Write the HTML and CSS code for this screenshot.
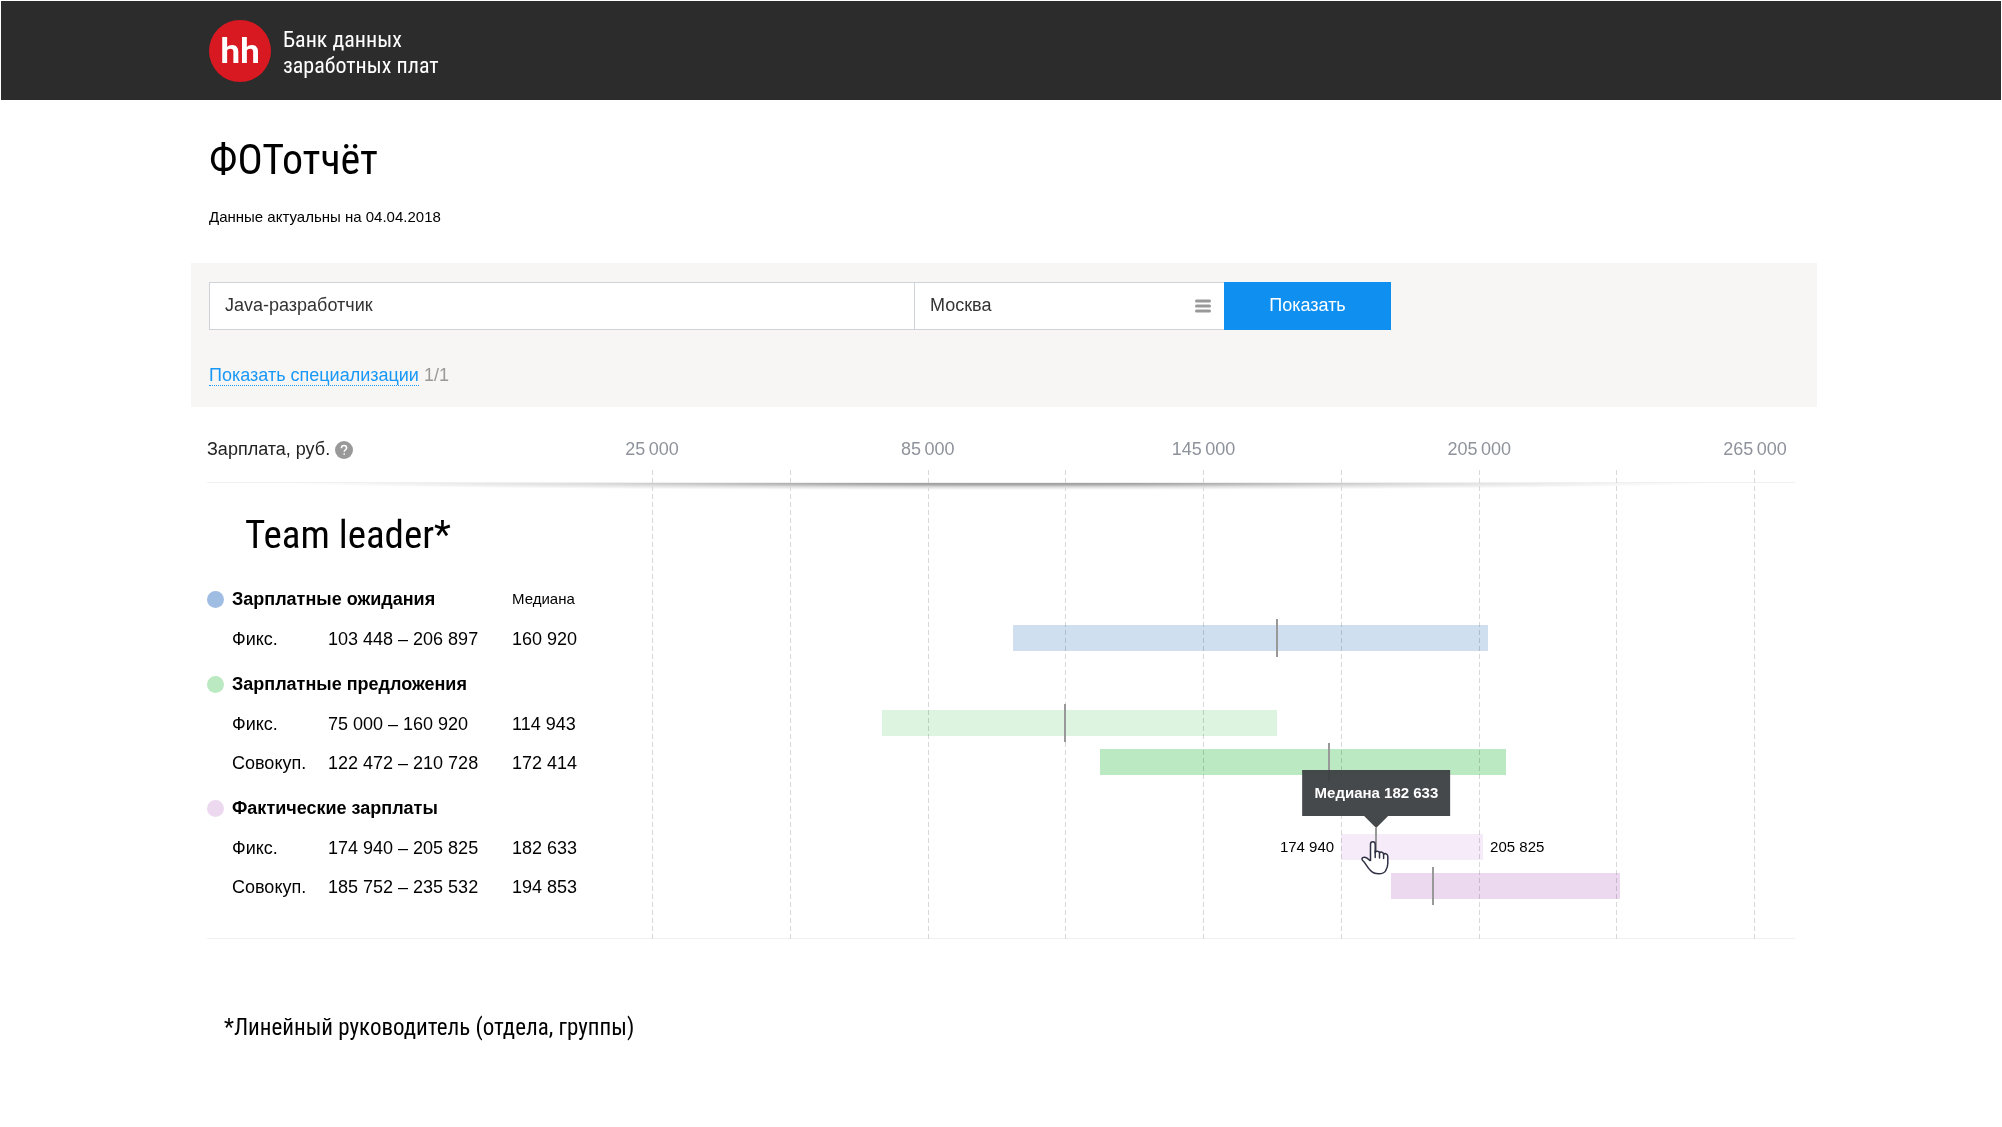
FILE: index.html
```html
<!DOCTYPE html>
<html lang="ru">
<head>
<meta charset="utf-8">
<meta name="viewport" content="width=device-width, initial-scale=1">
<title>ФОТотчёт — Банк данных заработных плат</title>
<link rel="stylesheet" href="styles.css">
</head>
<body>
<header class="topbar">
  <a class="brand" href="#">
    <svg class="brand-logo" viewBox="0 0 62 62" aria-hidden="true">
      <circle cx="31" cy="31" r="31" fill="#d91921"/>
      <text class="brand-hh" x="31" y="43" text-anchor="middle" fill="#fff">hh</text>
    </svg>
    <span class="brand-name">Банк данных<br>заработных плат</span>
  </a>
</header>

<main class="page">
  <div class="intro">
    <h1 class="title">ФОТотчёт</h1>
    <p class="updated">Данные актуальны на 04.04.2018</p>
  </div>

  <form class="search">
    <div class="fields">
      <input class="field field-job" type="text" value="Java-разработчик" aria-label="Профессия">
      <div class="region">
        <input class="field field-region" type="text" value="Москва" aria-label="Регион">
        <button class="region-list" type="button" aria-label="Выбрать регион">
          <svg viewBox="0 0 16 14" width="16" height="14" stroke="#999" stroke-width="3" stroke-linecap="round"><path d="M1.5 2h13M1.5 7h13M1.5 12h13"/></svg>
        </button>
      </div>
      <button class="submit" type="submit">Показать</button>
    </div>
    <p class="specs"><a class="specs-link" href="#">Показать специализации</a> 1/1</p>
  </form>

  <section class="chart">
    <div class="axis">
      <div class="axis-title">Зарплата, руб.
        <svg class="help" viewBox="0 0 18 18" width="18" height="18" aria-hidden="true"><circle cx="9" cy="9" r="9" fill="#999"/><path d="M6.4 7.2c0-1.7 1.1-2.6 2.6-2.6s2.6.9 2.6 2.3c0 1.8-2.4 1.9-2.4 3.9M9.2 12.2v1.6" fill="none" stroke="#fff" stroke-width="1.5"/></svg>
      </div>
      <div class="ticks">
        <span class="tick">25&#8201;000</span>
        <span class="tick">85&#8201;000</span>
        <span class="tick">145&#8201;000</span>
        <span class="tick">205&#8201;000</span>
        <span class="tick">265&#8201;000</span>
      </div>
    </div>
    <div class="gridlines" aria-hidden="true"><i></i><i></i><i></i><i></i><i></i><i></i><i></i><i></i><i></i></div>

    <h2 class="role">Team leader*</h2>

    <table class="salaries">
      <colgroup><col class="col-kind"><col class="col-range"><col class="col-median"><col></colgroup>
      <tbody>
        <tr class="group"><th colspan="2" scope="rowgroup"><span class="name dot-blue">Зарплатные ожидания</span></th><th class="median-head" scope="col">Медиана</th><td></td></tr>
        <tr><td class="kind">Фикс.</td><td>103 448 – 206 897</td><td>160 920</td>
          <td><div class="plot"><div class="bar bar-blue" style="left:32.69%;width:43.1%"></div><div class="mark" style="left:56.63%"></div></div></td></tr>
      </tbody>
      <tbody>
        <tr class="group"><th colspan="2" scope="rowgroup"><span class="name dot-green">Зарплатные предложения</span></th><td></td><td></td></tr>
        <tr><td class="kind">Фикс.</td><td>75 000 – 160 920</td><td>114 943</td>
          <td><div class="plot"><div class="bar bar-green-light" style="left:20.83%;width:35.8%"></div><div class="mark" style="left:37.48%"></div></div></td></tr>
        <tr><td class="kind">Совокуп.</td><td>122 472 – 210 728</td><td>172 414</td>
          <td><div class="plot"><div class="bar bar-green" style="left:40.61%;width:36.77%"></div><div class="mark" style="left:61.42%"></div></div></td></tr>
      </tbody>
      <tbody>
        <tr class="group"><th colspan="2" scope="rowgroup"><span class="name dot-pink">Фактические зарплаты</span></th><td></td><td></td></tr>
        <tr><td class="kind">Фикс.</td><td>174 940 – 205 825</td><td>182 633</td>
          <td><div class="plot">
            <div class="bar bar-pink-light" style="left:62.48%;width:12.87%"><span class="edge edge-min">174 940</span><span class="edge edge-max">205 825</span></div>
            <div class="mark" style="left:65.68%">
              <div class="tooltip" role="tooltip">Медиана 182 633</div>
              <svg class="pointer" viewBox="0 0 29 36" width="29" height="36" aria-hidden="true"><path d="M9.500 21V4.200C9.500.8 14.200.8 14.200 4.200V12.500C15 10.500 18.300 10.900 18.500 13C19.500 11.400 22.500 12 22.600 14.200C24 13 26.800 13.800 26.800 16.500V23.500C26.800 27 25.600 29 24.500 31C22.500 34.500 13.500 35 9.500 30.500C5.500 26.500 4.500 23 2 20.800C-.8 17.900 2.800 16.200 6 18.200L9.500 21" fill="#fff" stroke="#2f3044" stroke-width="1.500" stroke-linejoin="round"/><path d="M14.200 11v6.500M18.500 13v5M22.600 14.500v4" fill="none" stroke="#2f3044" stroke-width="1.500" stroke-linecap="round"/></svg>
            </div>
          </div></td></tr>
        <tr><td class="kind">Совокуп.</td><td>185 752 – 235 532</td><td>194 853</td>
          <td><div class="plot"><div class="bar bar-pink" style="left:66.98%;width:20.74%"></div><div class="mark" style="left:70.77%"></div></div></td></tr>
      </tbody>
    </table>
  </section>

  <p class="footnote">*Линейный руководитель (отдела, группы)</p>
</main>
</body>
</html>
```
FILE: styles.css
```css
* { box-sizing: border-box; }

body {
  margin: 0;
  background: #fff;
  color: #000;
  font: 18px/24px "Liberation Sans", Arial, sans-serif;
}

h1, h2, p { margin: 0; font-weight: 400; }

input, button { font: inherit; margin: 0; border-radius: 0; }

/* Header */
.topbar {
  margin: 1px 1px 0;
  padding: 19px 208px 18px;
  background: #2c2c2c;
}

.brand {
  display: flex;
  align-items: center;
  gap: 12px;
  color: #fff;
  text-decoration: none;
  font: 22px/26px "Roboto Condensed", Roboto, sans-serif;
}

.brand-logo { width: 62px; height: 62px; }

.brand-hh { font: 900 35px Lato, sans-serif; }

.brand-name { padding-top: 4px; }

/* Page */
.page { padding: 0 185px 0 191px; }

.intro { padding: 33px 18px 34px; }

.title { font: 42px/54px "Roboto Condensed", Roboto, sans-serif; }

.updated { margin-top: 18px; font-size: 15px; }

/* Search */
.search { padding: 19px 18px 20px; background: #f7f6f5; }

.fields { display: flex; height: 48px; max-width: 1182px; }

.field {
  width: 100%;
  height: 48px;
  padding: 0 15px 2px;
  border: 1px solid #cdd3d8;
  background: #fff;
  color: #333;
}

.field-job { flex: 1; border-right: 0; }

.region { position: relative; flex: 0 0 310px; }

.field-region { border-right: 0; }

.region-list {
  position: absolute;
  right: 8px;
  top: 12px;
  display: flex;
  padding: 5px;
  border: 0;
  background: none;
}

.submit {
  flex: 0 0 167px;
  padding-bottom: 3px;
  border: 0;
  background: #0f8ff0;
  color: #fff;
}

.specs { margin-top: 33px; color: #999; }

.specs-link { color: #1a98f5; text-decoration: none; border-bottom: 1px dotted #1a98f5; }

/* Chart */
.chart {
  position: relative;
  margin: 0 22px 0 16px;
  padding: 0 40px 32px 0;
  border-bottom: 1px solid #f0f0f0;
}

.axis { display: flex; height: 75px; padding-top: 30px; }

.axis::after {
  content: "";
  position: absolute;
  left: 0;
  right: 0;
  top: 75px;
  height: 7px;
  border-top: 1px solid #f0f0f0;
  background: radial-gradient(ellipse 45% 100% at 50% 0, #a3a3a3 20%, rgba(190, 190, 190, .5) 60%, rgba(255, 255, 255, 0));
}

.axis-title { display: flex; flex: 0 0 445px; gap: 5px; color: #222; }

.help { margin-top: 4px; }

.ticks { display: flex; flex: 1; justify-content: space-between; color: #8e939b; }

.tick { display: flex; justify-content: center; width: 0; white-space: nowrap; }

.gridlines {
  position: absolute;
  left: 445px;
  right: 40px;
  top: 63px;
  bottom: -4px;
  display: flex;
  justify-content: space-between;
}

.gridlines i {
  width: 1px;
  background: repeating-linear-gradient(#d8d8d8 0 5px, transparent 5px 8px);
}

.role {
  padding: 28px 38px 13px;
  font: 39px/50px "Roboto Condensed", Roboto, sans-serif;
}

.salaries { width: 100%; table-layout: fixed; border-collapse: collapse; }

.col-kind { width: 121px; }
.col-range { width: 184px; }
.col-median { width: 140px; }

.salaries th, .salaries td { height: 39px; padding: 0; text-align: left; }

.salaries .group th { height: 46px; padding-top: 6px; }

.kind { text-indent: 25px; }

.name { display: flex; align-items: center; gap: 8px; font-weight: 700; }

.name::before { content: ""; width: 17px; height: 17px; border-radius: 50%; background: currentColor; }

.dot-blue::before { background: #9fbce2; }
.dot-green::before { background: #bbe9c1; }
.dot-pink::before { background: #ecd9f0; }

.median-head { font-weight: 400; font-size: 15px; }

.plot { position: relative; height: 39px; }

.bar { position: absolute; top: 6px; height: 26px; mix-blend-mode: multiply; }

.bar-blue { background: #cfdff0; }
.bar-green-light { background: #dcf4e0; }
.bar-green { background: #bbe9c1; }
.bar-pink-light { background: #f6ebf8; }
.bar-pink { background: #ecd9f0; }

.mark { position: absolute; top: 0; z-index: 1; width: 2px; height: 38px; margin-left: -1px; background: #999; }

.edge { position: absolute; top: 1px; font-size: 15px; white-space: nowrap; }
.edge-min { right: 100%; margin-right: 7px; }
.edge-max { left: 100%; margin-left: 7px; }

.tooltip {
  position: absolute;
  left: 50%;
  bottom: 50px;
  padding: 11px 12px;
  background: rgba(60, 63, 66, .95);
  color: #fff;
  font-weight: 700;
  font-size: 15px;
  white-space: nowrap;
  transform: translateX(-50%);
}

.tooltip::after {
  content: "";
  position: absolute;
  left: 50%;
  top: 100%;
  margin-left: -12px;
  border: 12px solid transparent;
  border-bottom: 0;
  border-top-color: rgba(60, 63, 66, .95);
}

.pointer { position: absolute; left: -14px; top: 12px; }

.footnote {
  padding: 75px 33px 0;
  font: 23px/28px "Roboto Condensed", Roboto, sans-serif;
}
```
